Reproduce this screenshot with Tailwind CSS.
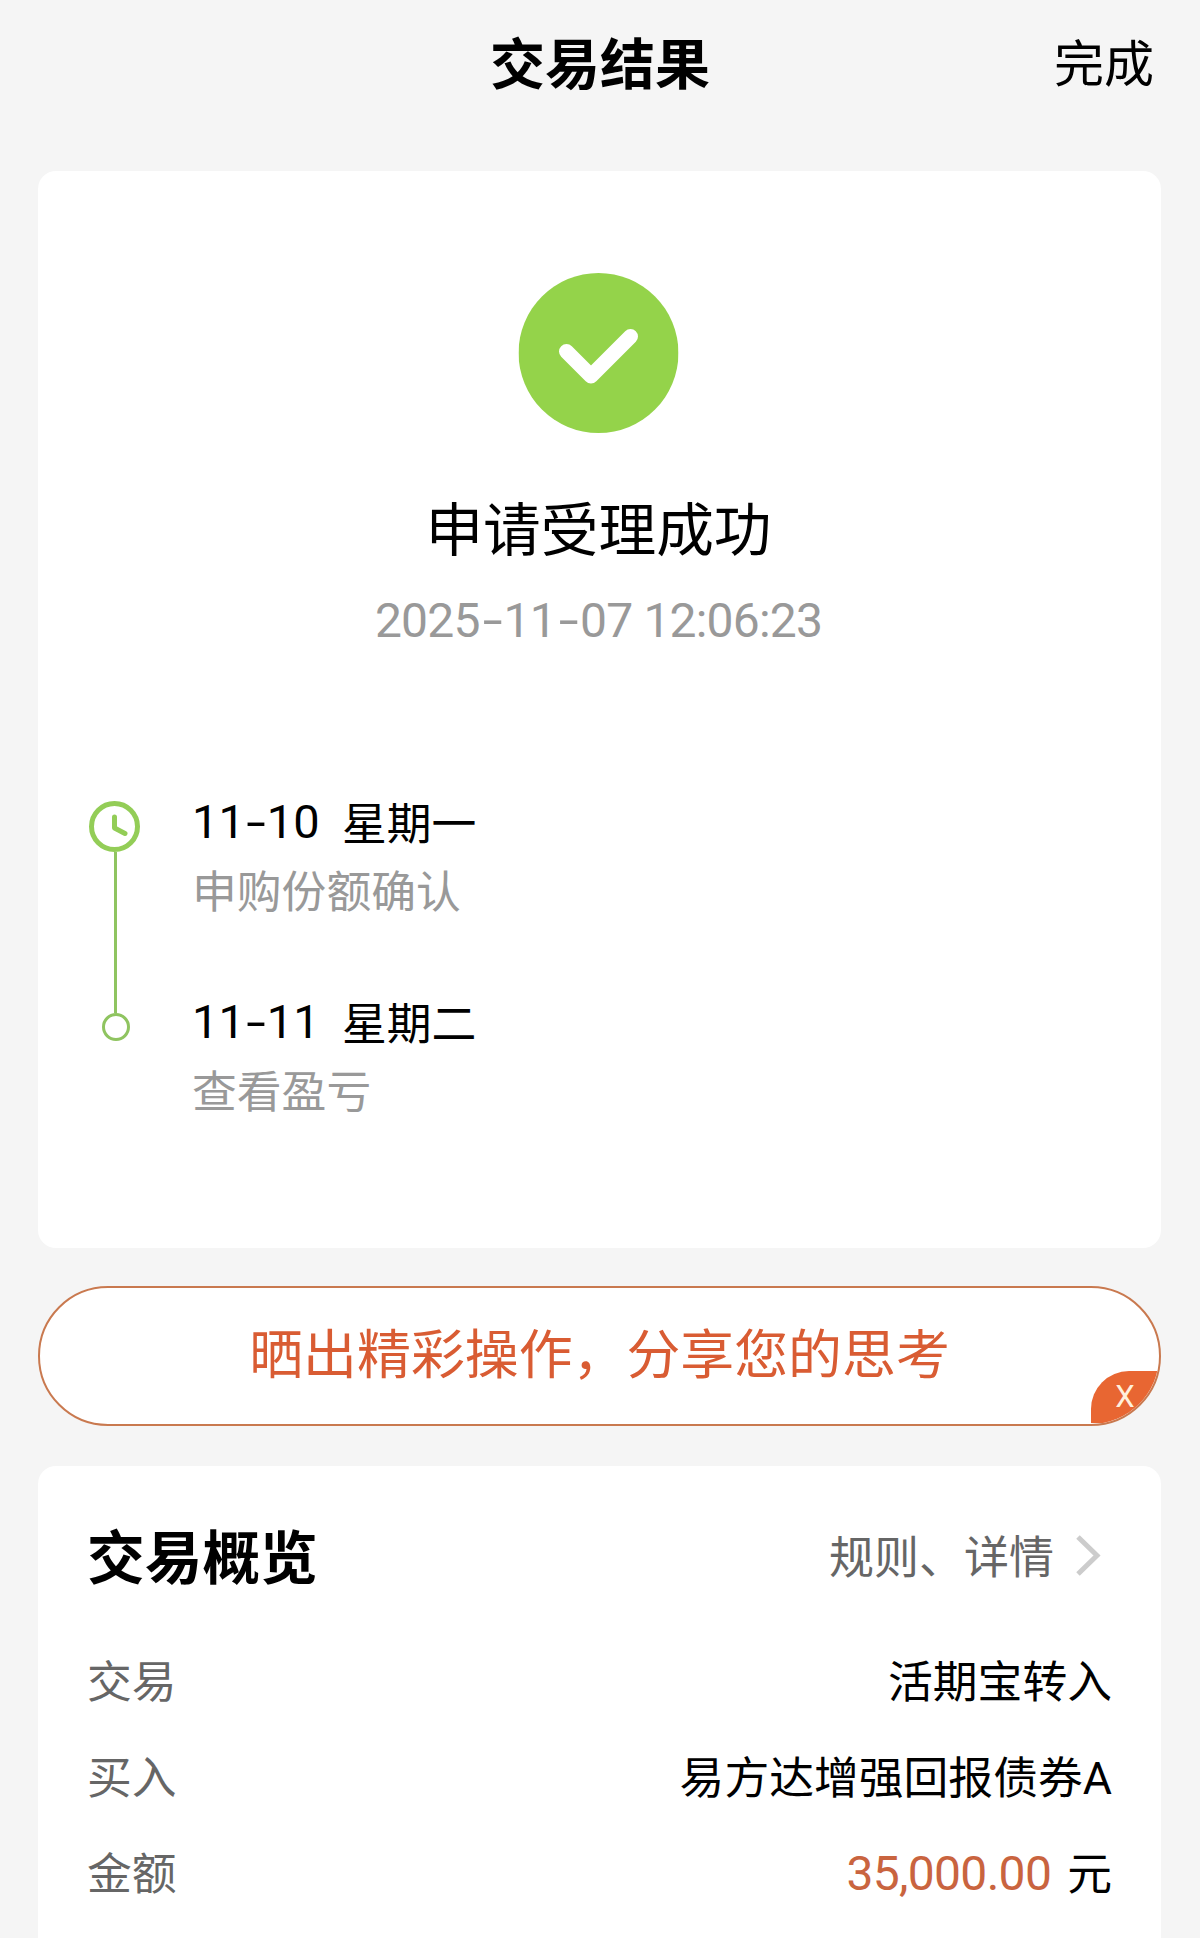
<!DOCTYPE html>
<html lang="zh-CN">
<head>
  <meta charset="UTF-8" />
  <meta name="viewport" content="width=device-width, initial-scale=1.0"/>
  <title>交易结果</title>
  <script src="https://cdn.jsdelivr.net/npm/@tailwindcss/browser@4"></script>
</head>
<body class="bg-[#f5f5f5] text-black font-['Noto_Sans_CJK_SC',sans-serif] h-[1938px] overflow-hidden">
  <header class="grid grid-cols-3 items-center h-[120px] mb-[51px]">
    <span></span>
    <h1 class="text-[55px] leading-[60px] font-bold text-center">交易结果</h1>
    <a href="#" class="text-[50px] leading-[60px] text-right pr-[46px]">完成</a>
  </header>

  <main class="pl-[38px] pr-[39px]">
    <section class="bg-white rounded-[18px] h-[1077px] pt-[102px]">
      <svg class="block mx-auto w-40 h-40 -translate-x-[1.5px]" viewBox="0 0 160 160" fill="none">
        <circle cx="80" cy="80" r="80" fill="#94d34a"/>
        <path d="M48 78.500L72.500 103L112 63.500" stroke="#fff" stroke-width="15" stroke-linecap="round" stroke-linejoin="round"/>
      </svg>
      <h2 class="mt-[58px] text-[57.7px] leading-[70px] text-center -translate-x-px">申请受理成功</h2>
      <p class="mt-[30px] text-[48px] leading-[60px] tracking-[-0.8px] text-center text-[#999] font-['Roboto',sans-serif] -translate-x-px">2025<span class="inline-block w-[24px] scale-x-150">-</span>11<span class="inline-block w-[24px] scale-x-150">-</span>07 12:06:23</p>

      <!-- timeline -->
      <div class="flex mt-[149px] pl-[50px]">
        <svg class="w-[54px] h-[250px] shrink-0" viewBox="0 0 54 250" fill="none">
          <path d="M27.500 52V213" stroke="#8fc460" stroke-width="3"/>
          <circle cx="26.500" cy="26.500" r="23" stroke="#93cd57" stroke-width="5"/>
          <path d="M26.500 17V28L37 33.500" stroke="#93cd57" stroke-width="5" stroke-linecap="round" stroke-linejoin="round"/>
          <circle cx="28" cy="227" r="12.500" stroke="#8fc460" stroke-width="3"/>
        </svg>
        <ul class="-mt-[9px] pl-[50px] text-[44.8px] leading-[60px]">
          <li class="h-[200px]">
            <p class="flex"><span class="w-[150px] pt-px text-[47px] font-['Roboto',sans-serif]">11<span class="inline-block w-[22px] text-center scale-x-150">-</span>10</span>星期一</p>
            <p class="mt-[7px] text-[#999]">申购份额确认</p>
          </li>
          <li class="h-[200px]">
            <p class="flex"><span class="w-[150px] pt-px text-[47px] font-['Roboto',sans-serif]">11<span class="inline-block w-[22px] text-center scale-x-150">-</span>11</span>星期二</p>
            <p class="mt-[7px] text-[#999]">查看盈亏</p>
          </li>
        </ul>
      </div>
    </section>

    <div class="relative mt-[38px] h-[140px] rounded-full border-2 border-[#c9794f] bg-white overflow-hidden text-center text-[53.9px] leading-[126px] text-[#d95c33]">
      晒出精彩操作，分享您的思考
      <button class="absolute right-0 bottom-px w-[68px] h-[52px] rounded-tl-[38px] bg-[#e86632] text-[#fff0dc] text-[31px] leading-[50px] font-['Roboto',sans-serif]">X</button>
    </div>

    <section class="mt-[40px] h-[520px] bg-white rounded-[18px] pl-[49px] pr-[49px] pt-[54px]">
      <div class="flex items-center justify-between">
        <h2 class="text-[57.7px] leading-[68px] font-bold">交易概览</h2>
        <a href="#" class="flex items-center text-[45px] leading-[60px] text-[#666] translate-y-px">
          规则、详情
          <svg class="w-[27px] h-[42px] ml-[21px] mr-[10px]" viewBox="0 0 27 42" fill="none">
            <path d="M3 3L22 21.500L3 40" stroke="#ccc" stroke-width="5"/>
          </svg>
        </a>
      </div>
      <dl class="mt-[61px] text-[44.8px] leading-[60px] space-y-9">
        <div class="flex justify-between h-[60px]">
          <dt class="text-[#666]">交易</dt>
          <dd>活期宝转入</dd>
        </div>
        <div class="flex justify-between h-[60px]">
          <dt class="text-[#666]">买入</dt>
          <dd>易方达增强回报债券<span class="font-['Roboto',sans-serif]">A</span></dd>
        </div>
        <div class="flex justify-between h-[60px]">
          <dt class="text-[#666]">金额</dt>
          <dd><span class="mr-[6px] text-[48px] leading-none tracking-[-0.7px] text-[#c9643f] font-['Roboto',sans-serif]">35,000.00</span> 元</dd>
        </div>
      </dl>
    </section>
  </main>
</body>
</html>
